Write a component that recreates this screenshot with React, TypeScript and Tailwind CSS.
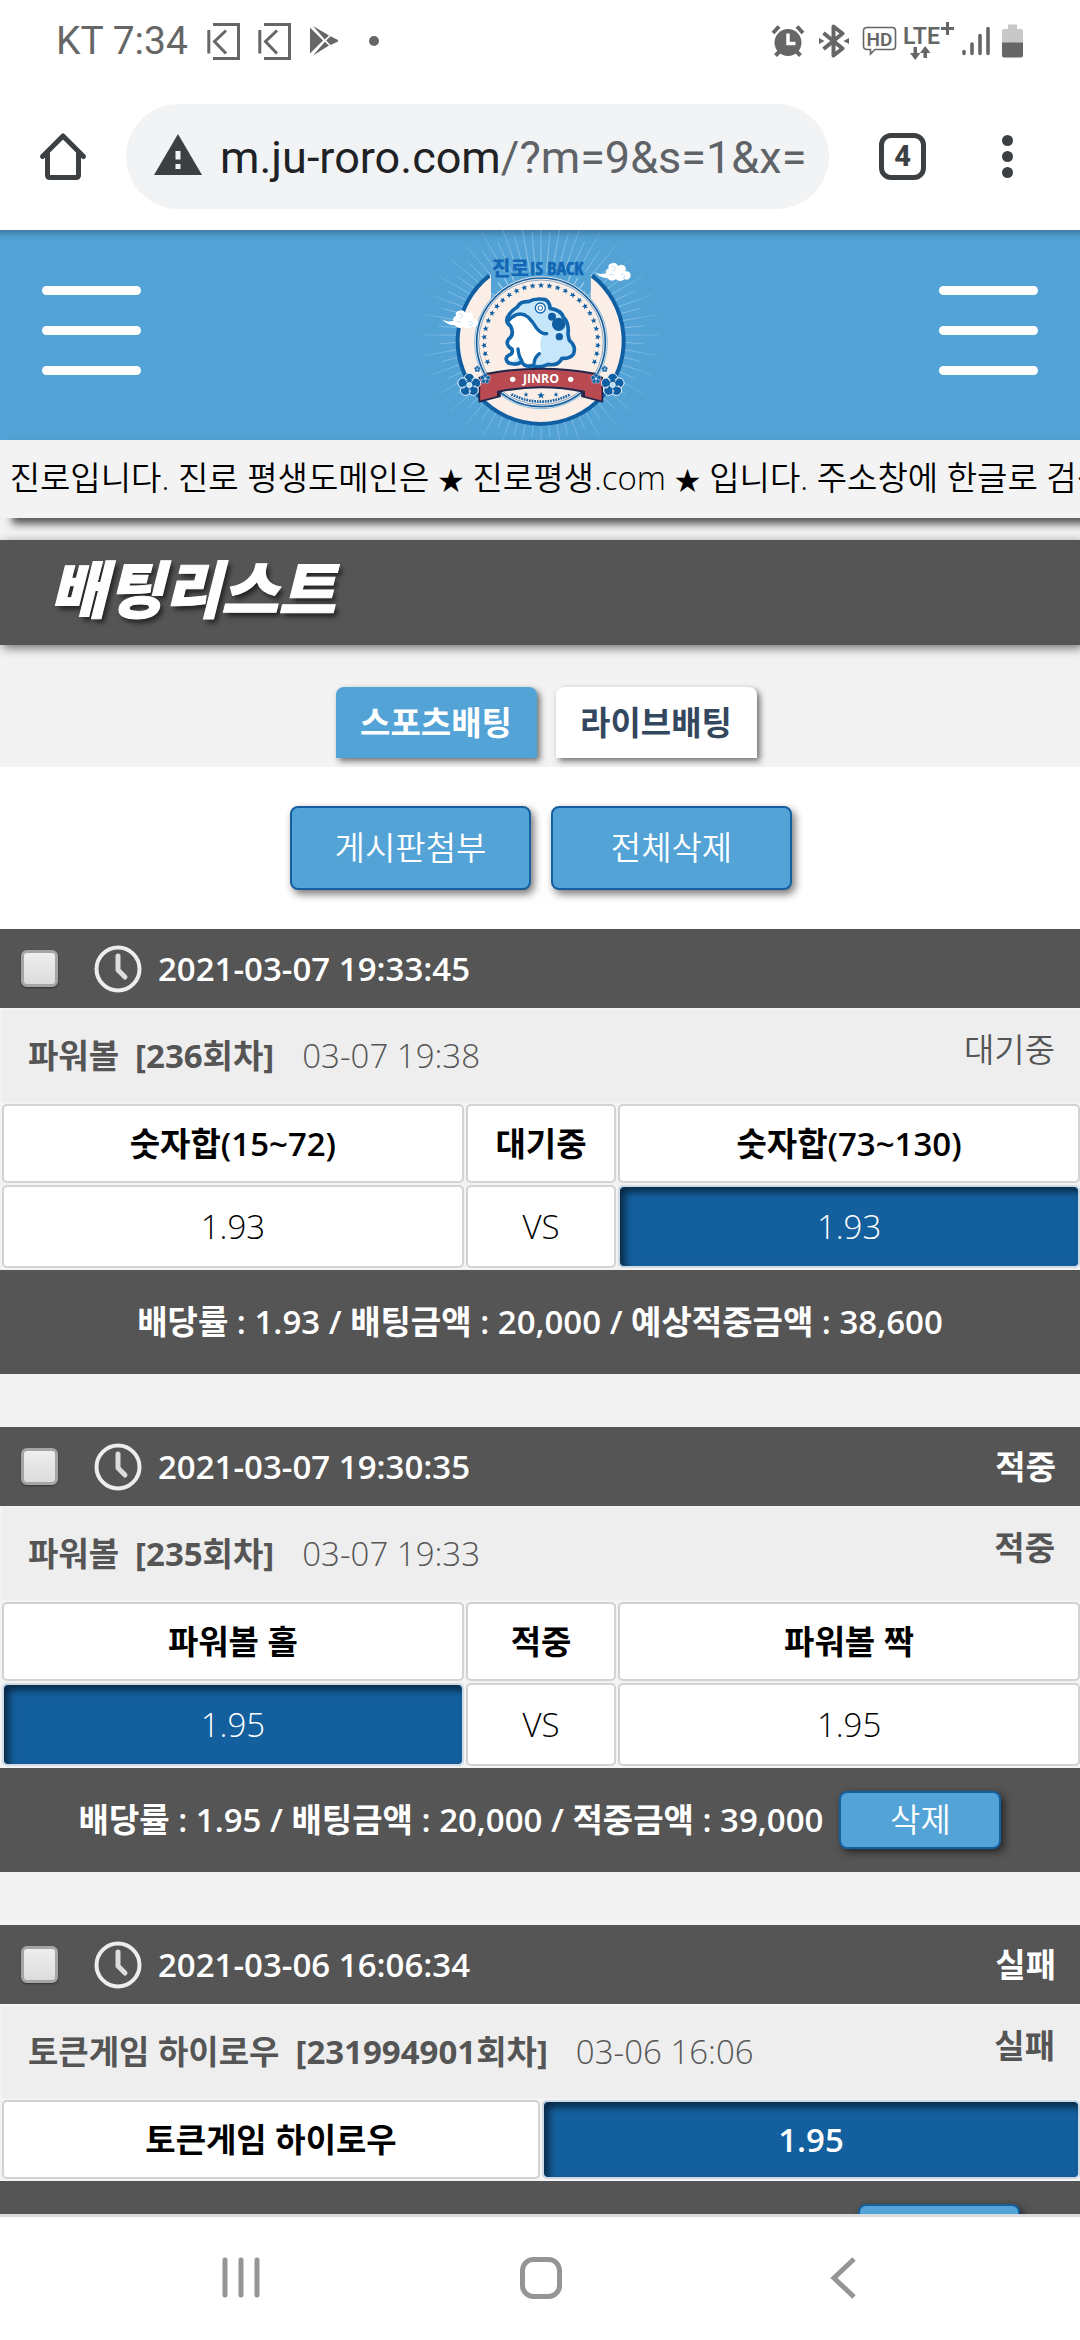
import { useState } from "react";

interface Cell {
  text: string;
  bold?: boolean;
  picked?: boolean;
}

interface Bet {
  id: number;
  createdAt: string;
  status: string;
  game: string;
  round: string;
  playedAt: string;
  result: string;
  resultBold: boolean;
  rows: Cell[][];
  summary: string;
  deletable: boolean;
}

const bets: Bet[] = [
  {
    id: 1,
    createdAt: "2021-03-07 19:33:45",
    status: "",
    game: "파워볼",
    round: "[236회차]",
    playedAt: "03-07 19:38",
    result: "대기중",
    resultBold: false,
    rows: [
      [
        { text: "숫자합(15~72)", bold: true },
        { text: "대기중", bold: true },
        { text: "숫자합(73~130)", bold: true },
      ],
      [{ text: "1.93" }, { text: "VS" }, { text: "1.93", picked: true }],
    ],
    summary: "배당률 : 1.93 / 배팅금액 : 20,000 / 예상적중금액 : 38,600",
    deletable: false,
  },
  {
    id: 2,
    createdAt: "2021-03-07 19:30:35",
    status: "적중",
    game: "파워볼",
    round: "[235회차]",
    playedAt: "03-07 19:33",
    result: "적중",
    resultBold: true,
    rows: [
      [
        { text: "파워볼 홀", bold: true },
        { text: "적중", bold: true },
        { text: "파워볼 짝", bold: true },
      ],
      [{ text: "1.95", picked: true }, { text: "VS" }, { text: "1.95" }],
    ],
    summary: "배당률 : 1.95 / 배팅금액 : 20,000 / 적중금액 : 39,000",
    deletable: true,
  },
  {
    id: 3,
    createdAt: "2021-03-06 16:06:34",
    status: "실패",
    game: "토큰게임 하이로우",
    round: "[231994901회차]",
    playedAt: "03-06 16:06",
    result: "실패",
    resultBold: true,
    rows: [
      [
        { text: "토큰게임 하이로우", bold: true },
        { text: "1.95", bold: true, picked: true },
      ],
    ],
    summary: "배당률 : 1.95 / 배팅금액 : 100,000 / 적중금액 : 195,000",
    deletable: true,
  },
];

const KIcon = () => (
  <svg width="33" height="37" viewBox="0 0 33 37" fill="none" stroke="#666" strokeWidth="3">
    <path d="M6 1.5H31.5V35.5H6" />
    <path d="M1.8 7V30.500M19 7.500L7.500 18.500L19 30.500" />
  </svg>
);

function StatusBar() {
  return (
    <div className="flex h-[82px] items-center justify-between pr-[57px] pl-[56px]">
      <div className="flex items-center">
        <span className="mr-[19px] text-[39px] leading-none text-[#666]">KT 7:34</span>
        <div className="flex items-center gap-[18px]">
          <KIcon />
          <KIcon />
        </div>
        <svg className="ml-[18px]" width="30" height="32" viewBox="0 0 30 32" fill="#666">
          <path d="M1 2.500L14 15.500L1 28.500Z" />
          <path d="M4 1L20 10.500L15.800 14.500Z" />
          <path d="M4 30.500L20 20.500L15.800 16.800Z" />
          <path d="M21.500 11.200L29 15L29 16.500L21.500 20L17.200 15.600Z" />
        </svg>
        <span className="ml-[30px] h-[10px] w-[10px] rounded-full bg-[#666]" />
      </div>
      <div className="flex items-center">
        <svg width="34" height="34" viewBox="0 0 34 34" fill="none" stroke="#666">
          <circle cx="17" cy="18.500" r="13.500" fill="#666" stroke="none" />
          <path d="M2 9L8 2.500M32 9L26 2.500" strokeWidth="4" />
          <path d="M4.500 31.500L9 27M29.500 31.500L25 27" strokeWidth="4" />
          <path d="M17 9.500V19.500H24.500" stroke="#fff" strokeWidth="3.500" />
        </svg>
        <svg className="ml-[14px]" width="30" height="34" viewBox="0 0 30 34" fill="none" stroke="#666" strokeWidth="4">
          <path d="M4.500 9L23.500 24.500L14.500 31.500V2.500L23.500 9.500L4.500 25" strokeLinejoin="round" />
          <path d="M0 14V20L5.500 17ZM30 14V20L24.500 17Z" fill="#666" stroke="none" />
        </svg>
        <svg className="ml-[13px]" width="35" height="30" viewBox="0 0 35 30">
          <path
            d="M5 1.500H30Q33.500 1.500 33.500 5V20Q33.500 23.500 30 23.500H13L8.500 28V23.500H5Q1.500 23.500 1.500 20V5Q1.500 1.500 5 1.500Z"
            fill="none"
            stroke="#666"
            strokeWidth="1.600"
          />
          <text x="17.500" y="19.500" textAnchor="middle" fontSize="19" fontWeight="600" fill="#666" fontFamily="Roboto">
            HD
          </text>
        </svg>
        <svg className="ml-[6px]" width="51" height="40" viewBox="0 0 51 40" fill="#666">
          <text x="0" y="23" fontSize="23" fontWeight="600" fontFamily="Roboto">
            LTE
          </text>
          <path d="M43 1H46V6H51V9H46V14H43V9H38V6H43Z" />
          <path d="M10.500 26H14V32H17.500L12.200 39L7 32H10.500Z" />
          <path d="M20.500 37H24V32H27.500L22.200 25L17 32H20.500Z" />
        </svg>
        <svg className="ml-[8px]" width="28" height="32" viewBox="0 0 28 32" stroke="#666" strokeWidth="3.600" strokeLinecap="round">
          <path d="M2 26.500V28.500M10 19V28.500M18 10.500V28.500M26 3.500V28.500" />
        </svg>
        <svg className="ml-[12px]" width="21" height="34" viewBox="0 0 21 34">
          <path d="M6 0.500H15V5H19Q21 5 21 7V19H0V7Q0 5 2 5H6Z" fill="#c8c8c8" />
          <path d="M0 18.500H21V31.500Q21 33.500 19 33.500H2Q0 33.500 0 31.500Z" fill="#666" />
        </svg>
      </div>
    </div>
  );
}

function AddressBar() {
  return (
    <div className="flex h-[148px] items-center pr-[67px] pl-[38px]">
      <button type="button" aria-label="홈">
        <svg width="50" height="50" viewBox="0 0 50 50" fill="none" stroke="#3c4043" strokeWidth="5" strokeLinecap="round" strokeLinejoin="round">
          <path d="M4.500 25.500L25 5L45.500 25.500" />
          <path d="M9.500 21V44Q9.500 46.500 12 46.500H38Q40.500 46.500 40.500 44V21" />
        </svg>
      </button>
      <div className="ml-[38px] flex h-[105px] min-w-0 flex-1 items-center rounded-full bg-[#f1f3f4] pr-[20px] pl-[28px]">
        <svg className="shrink-0" width="48" height="48" viewBox="0 0 48 48">
          <path d="M24 2L48 43H0Z" fill="#3c4043" />
          <path d="M21.500 19H26.500V27.500H21.500ZM21.500 32H26.500V37H21.500Z" fill="#f1f3f4" />
        </svg>
        <div className="ml-[18px] min-w-0 flex-1 overflow-hidden pt-1 text-[45px] leading-[60px] whitespace-nowrap text-[#5f6368]">
          <span className="text-[#202124]">m.ju-roro.com</span>/?m=9&amp;s=1&amp;x=
        </div>
      </div>
      <button
        type="button"
        className="ml-[50px] h-[47px] w-[47px] rounded-[12px] border-[5px] border-[#3c4043] text-[29px] leading-[37px] font-extrabold text-[#3c4043]"
      >
        4
      </button>
      <button type="button" aria-label="메뉴" className="ml-[76px] flex flex-col gap-[5px]">
        <span className="h-[11px] w-[11px] rounded-full bg-[#3c4043]" />
        <span className="h-[11px] w-[11px] rounded-full bg-[#3c4043]" />
        <span className="h-[11px] w-[11px] rounded-full bg-[#3c4043]" />
      </button>
    </div>
  );
}

const rays = Array.from({ length: 72 }, (_, i) => (i * 5 * Math.PI) / 180);
const stars = Array.from({ length: 27 }, (_, i) => -110 + (i * 220) / 26);

const Flower = ({ x, y, s }: { x: number; y: number; s: number }) => (
  <g transform={`translate(${x} ${y}) scale(${s})`}>
    {[0, 72, 144, 216, 288].map((a) => (
      <circle key={a} cx="0" cy="-20" r="15" transform={`rotate(${a})`} fill="#115fa3" stroke="#fff" strokeWidth="2.500" />
    ))}
    <circle r="16" fill="#115fa3" />
    <circle r="8" fill="#b9dcf2" stroke="#fff" strokeWidth="2" />
    {[36, 108, 180, 252, 324].map((a) => (
      <path key={a} d="M0 -10V-22" transform={`rotate(${a})`} stroke="#fff" strokeWidth="2" />
    ))}
  </g>
);

const Cloud = ({ x, y }: { x: number; y: number }) => (
  <g transform={`translate(${x} ${y})`}>
    <path
      d="M0 28Q14 38 34 32Q32 20 42 18Q38 4 52 2Q66 -2 70 10Q82 2 92 12Q96 20 92 26Q108 24 108 40Q104 54 90 50Q76 60 64 50Q48 60 38 46Q16 46 0 28Z"
      fill="#fff"
    />
    <path d="M50 12Q60 8 62 18Q60 26 52 24M78 38Q86 30 92 40Q90 48 82 46M44 36Q54 32 58 40" fill="none" stroke="#b9dcf2" strokeWidth="2.500" />
  </g>
);

function Logo() {
  return (
    <svg width="280" height="210" viewBox="0 15 840 630" role="img" aria-label="진로 IS BACK">
      <defs>
        <radialGradient id="fade" gradientUnits="userSpaceOnUse" cx="423" cy="330" r="360">
          <stop offset="0.500" stopColor="#a9d4ee" stopOpacity="0.900" />
          <stop offset="1" stopColor="#a9d4ee" stopOpacity="0.150" />
        </radialGradient>
      </defs>
      {rays.map((a, i) => {
        const end = i % 2 ? 310 : 355;
        return (
          <line
            key={i}
            x1={423 + Math.sin(a) * 130}
            y1={330 - Math.cos(a) * 130}
            x2={423 + Math.sin(a) * end}
            y2={330 - Math.cos(a) * end}
            stroke="url(#fade)"
            strokeWidth="3"
          />
        );
      })}
      <path d="M273 149A249 249 0 1 0 572 149V230H273Z" fill="#fbeee6" />
      <path d="M268 152A249 249 0 1 0 576 152" fill="none" stroke="#115fa3" strokeWidth="12" />
      <path d="M273 140H572V198H273Z" fill="#53a3d7" />
      {[-36, -30, -24, 24, 30, 36].map((a) => (
        <path key={a} d="M423 130V170" transform={`rotate(${a} 423 350)`} stroke="#a9d4ee" strokeWidth="3" />
      ))}
      <circle cx="423" cy="352" r="199" fill="#fbeee6" stroke="#53a3d7" strokeWidth="2" />
      <circle cx="423" cy="352" r="193" fill="#fbeee6" stroke="#115fa3" strokeWidth="5" />
      <circle cx="423" cy="352" r="187" fill="none" stroke="#115fa3" strokeWidth="1.500" />
      {stars.map((a) => (
        <path
          key={a}
          d="M0 -9L2.500 -3L9 -3L4 1.500L6 8L0 4L-6 8L-4 1.500L-9 -3L-2.500 -3Z"
          transform={`rotate(${a} 423 352) translate(423 181)`}
          fill="#115fa3"
        />
      ))}
      <text x="276" y="154" fontSize="60" fontWeight="900" fill="#1266b4" fontFamily="'Noto Sans CJK KR'">
        진로
      </text>
      <text
        x="390"
        y="150"
        fontSize="54"
        fontWeight="900"
        fill="#1266b4"
        stroke="#1266b4"
        strokeWidth="2"
        fontFamily="'Open Sans Condensed', 'Roboto Condensed', 'Liberation Sans Narrow', sans-serif"
      >
        IS BACK
      </text>

      {/* toad */}
      <path
        d="M322 278Q332 258 352 246Q362 228 385 230Q408 218 436 224Q450 232 450 250Q482 254 490 276Q508 294 504 328Q506 338 508 346Q530 364 520 388Q508 402 486 400Q474 424 444 418Q420 430 396 422Q376 428 364 410Q352 422 326 414Q310 400 328 390Q340 386 336 372Q314 360 326 342Q344 330 332 304Q316 292 322 278Z"
        fill="#c6e7fa"
      />
      <path
        d="M330 288Q350 262 376 274Q398 286 410 312Q420 322 426 330Q416 356 424 378Q410 394 402 414L372 418Q358 402 354 382Q354 410 330 410Q318 400 334 392Q344 384 338 370Q322 360 330 346Q346 330 336 306Z"
        fill="#fff"
      />
      <path
        d="M322 278Q332 258 352 246Q362 228 385 230Q408 218 436 224Q450 232 450 250Q482 254 490 276Q508 294 504 328Q506 338 508 346Q530 364 520 388Q508 402 486 400Q474 424 444 418Q420 430 396 422Q376 428 364 410Q352 422 326 414Q310 400 328 390Q340 386 336 372Q314 360 326 342Q344 330 332 304Q316 292 322 278Z"
        fill="none"
        stroke="#1266ac"
        strokeWidth="11"
        strokeLinejoin="round"
      />
      <path d="M326 286Q356 254 384 276Q400 292 410 310Q424 328 440 326" fill="none" stroke="#1266ac" strokeWidth="10" strokeLinecap="round" />
      <path d="M354 372Q356 394 366 408M418 386Q404 396 402 416" fill="none" stroke="#1266ac" strokeWidth="10" strokeLinecap="round" />
      <circle cx="421" cy="249" r="15" fill="#fff" stroke="#1266ac" strokeWidth="4" />
      <circle cx="421" cy="249" r="7" fill="#fff" stroke="#1266ac" strokeWidth="3" />
      <circle cx="456" cy="275" r="12" fill="#115fa3" />
      <circle cx="476" cy="298" r="20" fill="#115fa3" />
      <circle cx="478" cy="335" r="11" fill="#115fa3" />

      {/* ribbon */}
      <path d="M238 458L262 446L300 500V514L238 530ZM607 458L584 446L546 500V514L607 530Z" fill="#b94a52" stroke="#20264a" strokeWidth="5" />
      <path d="M262 446Q423 416 584 446L580 508L552 500Q423 474 294 500L266 508Z" fill="#b94a52" />
      <path d="M262 446Q423 416 584 446M294 500Q423 474 552 500M294 498V516M552 498V516" fill="none" stroke="#20264a" strokeWidth="6" />
      <circle cx="338" cy="463" r="8" fill="#fff" />
      <circle cx="512" cy="463" r="8" fill="#fff" />
      <text x="423" y="475" textAnchor="middle" fontSize="37" fontWeight="700" fill="#fff" fontFamily="'Open Sans', sans-serif">
        JINRO
      </text>
      <path
        d="M0 -9L2.500 -3L9 -3L4 1.500L6 8L0 4L-6 8L-4 1.500L-9 -3L-2.500 -3Z"
        transform="translate(423 511) scale(1.200)"
        fill="#115fa3"
      />
      <path d="M378 501L380 506L385 506L381 510L383 515L378 512L373 515L375 510L371 506L376 506ZM468 501L470 506L475 506L471 510L473 515L468 512L463 515L465 510L461 506L466 506Z" fill="#115fa3" />
      <path d="M334 508Q423 552 512 508" fill="none" stroke="#115fa3" strokeWidth="8" strokeDasharray="5 3" />

      <Flower x={208} y={480} s={1} />
      <Flower x={638} y={480} s={1} />
      <Flower x={256} y={461} s={0.45} />
      <Flower x={588} y={461} s={0.45} />
      <Flower x={232} y={432} s={0.28} />
      <Flower x={614} y={432} s={0.28} />
      <Cloud x={584} y={113} />
      <Cloud x={126} y={255} />
    </svg>
  );
}

const MenuButton = ({ label }: { label: string }) => (
  <button type="button" aria-label={label} className="flex w-[99px] flex-col gap-[31px] pb-[10px]">
    <span className="h-[9px] rounded-full bg-white" />
    <span className="h-[9px] rounded-full bg-white" />
    <span className="h-[9px] rounded-full bg-white" />
  </button>
);

const ClockIcon = () => (
  <svg width="48" height="48" viewBox="0 0 48 48" fill="none" stroke="#ededed" strokeLinecap="round" strokeLinejoin="round">
    <circle cx="24" cy="24" r="21.500" strokeWidth="4" />
    <path d="M24 11V25L31 32" strokeWidth="5" stroke="#dcdcdc" />
  </svg>
);

function BetCard({ bet }: { bet: Bet }) {
  const [checked, setChecked] = useState(false);
  return (
    <article>
      <header className="flex h-[79px] items-center bg-[#555] pr-6 pl-[21px] font-semibold text-white">
        <input
          type="checkbox"
          id={`bet-${bet.id}`}
          checked={checked}
          onChange={() => setChecked(!checked)}
          className="h-[37px] w-[37px] appearance-none rounded-[6px] border-[3px] border-[#a5a5a5] bg-linear-to-b from-[#eee] to-[#dcdcdc] shadow-[0_1px_2px_rgba(0,0,0,0.4)] checked:bg-[#53a3d7]"
        />
        <label htmlFor={`bet-${bet.id}`} className="ml-9 flex items-center gap-4">
          <ClockIcon />
          {bet.createdAt}
        </label>
        <span className="ml-auto">{bet.status}</span>
      </header>
      <div className="mt-[2px] ml-[2px] flex h-[92px] items-center bg-[#eee] pr-[25px] pl-[26px] text-[#555]">
        <strong className="font-bold">{bet.game}</strong>
        <strong className="ml-4 font-bold">{bet.round}</strong>
        <span className="ml-7 font-[350]">{bet.playedAt}</span>
        <span className={`ml-auto pb-3 ${bet.resultBold ? "font-semibold" : "font-[350]"}`}>{bet.result}</span>
      </div>
      <table className="w-[calc(100%+2px)] table-fixed border-separate border-spacing-[2px] text-center">
        {bet.rows[0].length === 3 && (
          <colgroup>
            <col />
            <col className="w-[14%]" />
            <col />
          </colgroup>
        )}
        <tbody>
          {bet.rows.map((row, idx) => (
            <tr key={idx} className={idx === 0 ? "h-[79px]" : "h-[83px]"}>
              {row.map((cell, idx) => (
                <td
                  key={idx}
                  className={`rounded-[5px] border-2 p-0
                  ${cell.bold ? "font-semibold" : "font-[350]"}
                  ${
                    cell.picked
                      ? "border-[#d0dae4] bg-[#145f9d] bg-clip-padding text-white shadow-[inset_5px_5px_7px_rgba(0,0,0,0.55)]"
                      : "border-[#d3d3d3] bg-white text-black"
                  }
                  `}
                >
                  {cell.text}
                </td>
              ))}
            </tr>
          ))}
        </tbody>
      </table>
      <footer className="flex h-[104px] items-center justify-center gap-4 bg-[#555] font-semibold text-white">
        <p className="whitespace-nowrap">{bet.summary}</p>
        {bet.deletable && (
          <button
            type="button"
            className="h-[58px] w-[162px] rounded-[8px] border-2 border-[#145f9d] bg-[#53a3d7] font-[350] shadow-[3px_3px_8px_rgba(0,0,0,0.6)]"
          >
            삭제
          </button>
        )}
      </footer>
    </article>
  );
}

export default function App() {
  return (
    <div className="flex h-screen flex-col bg-white font-['Roboto','Noto_Sans_CJK_KR',sans-serif]">
      <StatusBar />
      <AddressBar />
      <main className="min-h-0 flex-1 overflow-x-hidden overflow-y-auto bg-[#f3f3f3] font-['Open_Sans','Noto_Sans_CJK_KR',sans-serif] text-[33px] leading-[48px] [scrollbar-width:none]">
        <header className="flex h-[210px] items-center justify-between bg-[#53a3d7] px-[42px] shadow-[inset_0_10px_8px_-8px_rgba(0,0,0,0.35)]">
          <MenuButton label="왼쪽 메뉴" />
          <Logo />
          <MenuButton label="오른쪽 메뉴" />
        </header>
        <div className="flex h-[78px] items-center overflow-hidden bg-[#f3f3f3] shadow-[12px_6px_8px_rgba(0,0,0,0.65)]">
          <p className="-ml-[90px] shrink-0 font-[350] whitespace-nowrap text-black">
            사이트 진로입니다. 진로 평생도메인은 <span className="text-[26px]">★</span> 진로평생.com{" "}
            <span className="text-[26px]">★</span> 입니다. 주소창에 한글로 검색
          </p>
        </div>
        <h1 className="mt-[22px] flex h-[105px] items-center bg-[#555] pb-2 pl-[50px] text-[62px] font-black text-white italic shadow-[3px_3px_10px_rgba(0,0,0,0.55)] [-webkit-text-stroke:1px_white] [text-shadow:3px_4px_5px_rgba(0,0,0,0.6)]">
          배팅리스트
        </h1>
        <nav className="flex justify-center gap-[19px] pt-[42px] pb-[9px] pl-3 font-semibold">
          <button
            type="button"
            className="h-[71px] w-[201px] rounded-t-[8px] bg-[#53a3d7] text-white shadow-[3px_3px_6px_rgba(0,0,0,0.55)]"
          >
            스포츠배팅
          </button>
          <button
            type="button"
            className="h-[71px] w-[201px] rounded-t-[8px] bg-white text-[#33475f] shadow-[3px_3px_6px_rgba(0,0,0,0.55)]"
          >
            라이브배팅
          </button>
        </nav>
        <div className="flex justify-center gap-5 bg-white py-[39px] pl-[2px] font-[350] text-white">
          <button
            type="button"
            className="h-[84px] w-[241px] rounded-[8px] border-2 border-[#145f9d] bg-[#53a3d7] shadow-[3px_4px_8px_rgba(0,0,0,0.55)]"
          >
            게시판첨부
          </button>
          <button
            type="button"
            className="h-[84px] w-[241px] rounded-[8px] border-2 border-[#145f9d] bg-[#53a3d7] shadow-[3px_4px_8px_rgba(0,0,0,0.55)]"
          >
            전체삭제
          </button>
        </div>
        <section className="flex flex-col gap-[53px]">
          {bets.map((bet) => (
            <BetCard key={bet.id} bet={bet} />
          ))}
        </section>
      </main>
      <footer className="flex h-[126px] items-center justify-around border-t-[3px] border-[#dadbde] bg-white pr-[86px] pb-[2px] pl-[91px]">
        <button type="button" aria-label="최근 앱">
          <svg width="42" height="44" viewBox="0 0 42 44" stroke="#959595" strokeWidth="5" strokeLinecap="round">
            <path d="M5 4V39M21 4V39M37 4V39" />
          </svg>
        </button>
        <button type="button" aria-label="홈 화면">
          <svg width="44" height="44" viewBox="0 0 44 44" fill="none" stroke="#959595" strokeWidth="5">
            <rect x="3.500" y="3.500" width="37" height="37" rx="11" />
          </svg>
        </button>
        <button type="button" aria-label="뒤로">
          <svg width="44" height="44" viewBox="0 0 44 44" fill="none" stroke="#959595" strokeWidth="5">
            <path d="M33 3L13 22L33 41" />
          </svg>
        </button>
      </footer>
    </div>
  );
}
